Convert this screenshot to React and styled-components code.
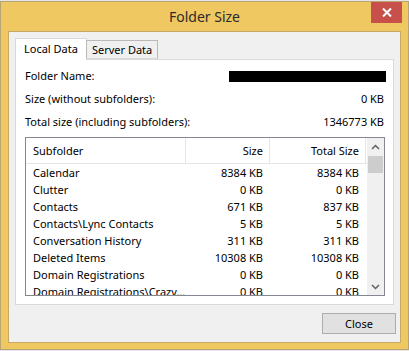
import React from 'react';
import styled, { createGlobalStyle } from 'styled-components';

const GlobalStyle = createGlobalStyle`
  html, body {
    margin: 0;
    padding: 0;
    background: #e6e6e6;
  }
  body {
    font-family: 'Noto Sans', 'Open Sans', sans-serif;
    font-size: 11px;
    color: #000;
  }
`;

const Page = styled.div`
  padding-top: 1px;
  width: 409px;
  height: 350px;
`;

const Window = styled.div`
  box-sizing: border-box;
  width: 409px;
  height: 349px;
  background: #f0c862;
  border: 1px solid #b8a472;
  display: flex;
  flex-direction: column;
`;

const TitleBar = styled.div`
  height: 29px;
  display: grid;
  grid-template-columns: 1fr auto 1fr;
  align-items: start;
`;

const Title = styled.div`
  grid-column: 2;
  font-size: 14px;
  line-height: 29px;
  color: #2b2b2b;
`;

const CloseX = styled.button`
  grid-column: 3;
  justify-self: end;
  margin-right: 6px;
  width: 31px;
  height: 21px;
  border: none;
  padding: 0;
  background: #c7504b;
  display: flex;
  align-items: center;
  justify-content: center;
`;

const Client = styled.div`
  box-sizing: border-box;
  margin: 0 7px 6px 7px;
  flex: 1;
  background: #f0f0f0;
  border: 1px solid #c4a968;
  padding: 7px 6px 8px 6px;
  display: flex;
  flex-direction: column;
`;

const TabStrip = styled.div`
  display: flex;
  align-items: flex-end;
  height: 20px;
  position: relative;
  z-index: 1;
`;

const Tab = styled.div`
  box-sizing: border-box;
  height: ${(p) => (p.$active ? '22px' : '19px')};
  margin-bottom: ${(p) => (p.$active ? '-1px' : '0')};
  padding: 0 ${(p) => (p.$active ? '8px' : '5px')};
  background: ${(p) => (p.$active ? '#fff' : '#f0f0f0')};
  border: 1px solid ${(p) => (p.$active ? '#d9d9d9' : '#b9b9b9')};
  border-bottom: ${(p) => (p.$active ? 'none' : '1px solid #d9d9d9')};
  margin-left: ${(p) => (p.$active ? '0' : '-1px')};
  line-height: ${(p) => (p.$active ? '20px' : '18px')};
  white-space: nowrap;
`;

const Panel = styled.div`
  box-sizing: border-box;
  height: 246px;
  background: #fff;
  border: 1px solid #d9d9d9;
  padding: 4px 9px 0 9px;
  display: flex;
  flex-direction: column;
`;

const InfoRow = styled.div`
  height: 23px;
  flex-shrink: 0;
  display: flex;
  align-items: center;
  justify-content: space-between;
`;

const Redacted = styled.div`
  width: 157px;
  height: 11px;
  background: #000;
  margin-right: -2px;
  margin-top: 1px;
`;

const ListBox = styled.div`
  box-sizing: border-box;
  margin-top: 4px;
  margin-right: -1px;
  height: 159px;
  flex-shrink: 0;
  border: 1px solid #828790;
  display: flex;
  overflow: hidden;
`;

const ListBody = styled.div`
  flex: 1;
  display: flex;
  flex-direction: column;
`;

const Cols = styled.div`
  display: grid;
  grid-template-columns: 160px 84px 96px;
  flex-shrink: 0;
`;

const HeaderRow = styled(Cols)`
  height: 25px;
  border-bottom: 1px solid #e5e5e5;
`;

const HeadCell = styled.div`
  display: flex;
  align-items: center;
  justify-content: ${(p) => (p.$right ? 'flex-end' : 'flex-start')};
  padding: 0 ${(p) => (p.$right ? '6px' : '0')} 0 ${(p) => (p.$right ? '0' : '7px')};
  border-right: 1px solid #e5e5e5;
`;

const Row = styled(Cols)`
  height: 17px;
`;

const Cell = styled.div`
  line-height: 17px;
  white-space: nowrap;
  text-align: ${(p) => (p.$right ? 'right' : 'left')};
  padding: 0 ${(p) => (p.$right ? '7px' : '0')} 0 ${(p) => (p.$right ? '0' : '7px')};
`;

const ScrollBar = styled.div`
  width: 17px;
  background: #f0f0f0;
  display: flex;
  flex-direction: column;
`;

const ScrollArrow = styled.div`
  height: 17px;
  display: flex;
  align-items: center;
  justify-content: center;
`;

const Thumb = styled.div`
  height: 17px;
  margin: 1px 1px 0 1px;
  background: #cdcdcd;
`;

const Track = styled.div`
  flex: 1;
`;

const Footer = styled.div`
  display: flex;
  justify-content: flex-end;
  margin-top: 8px;
`;

const Button = styled.button`
  box-sizing: border-box;
  width: 74px;
  height: 21px;
  margin-right: -2px;
  background: #e1e1e1;
  border: 1px solid #adadad;
  font-family: inherit;
  font-size: 11px;
  color: #000;
  padding: 0;
`;

const Chevron = ({ up }) => (
  <svg width="9" height="6" viewBox="0 0 9 6">
    <path
      d={up ? 'M1 5 L4.5 1.5 L8 5' : 'M1 1 L4.5 4.5 L8 1'}
      fill="none"
      stroke="#606060"
      strokeWidth="1.5"
    />
  </svg>
);

const rows = [
  ['Calendar', '8384 KB', '8384 KB'],
  ['Clutter', '0 KB', '0 KB'],
  ['Contacts', '671 KB', '837 KB'],
  ['Contacts\\Lync Contacts', '5 KB', '5 KB'],
  ['Conversation History', '311 KB', '311 KB'],
  ['Deleted Items', '10308 KB', '10308 KB'],
  ['Domain Registrations', '0 KB', '0 KB'],
  ['Domain Registrations\\Crazy...', '0 KB', '0 KB'],
];

export default function App() {
  return (
    <Page>
      <GlobalStyle />
      <Window>
        <TitleBar>
          <Title>Folder Size</Title>
          <CloseX aria-label="Close">
            <svg width="10" height="9" viewBox="0 0 10 9">
              <path d="M1 0.5 L9 8.5 M9 0.5 L1 8.5" stroke="#fff" strokeWidth="2" />
            </svg>
          </CloseX>
        </TitleBar>
        <Client>
          <TabStrip>
            <Tab $active>Local Data</Tab>
            <Tab>Server Data</Tab>
          </TabStrip>
          <Panel>
            <InfoRow>
              <span>Folder Name:</span>
              <Redacted />
            </InfoRow>
            <InfoRow>
              <span>Size (without subfolders):</span>
              <span>0 KB</span>
            </InfoRow>
            <InfoRow>
              <span>Total size (including subfolders):</span>
              <span>1346773 KB</span>
            </InfoRow>
            <ListBox>
              <ListBody>
                <HeaderRow>
                  <HeadCell>Subfolder</HeadCell>
                  <HeadCell $right>Size</HeadCell>
                  <HeadCell $right>Total Size</HeadCell>
                </HeaderRow>
                {rows.map(([name, size, total]) => (
                  <Row key={name}>
                    <Cell>{name}</Cell>
                    <Cell $right>{size}</Cell>
                    <Cell $right>{total}</Cell>
                  </Row>
                ))}
              </ListBody>
              <ScrollBar>
                <ScrollArrow><Chevron up /></ScrollArrow>
                <Thumb />
                <Track />
                <ScrollArrow><Chevron /></ScrollArrow>
              </ScrollBar>
            </ListBox>
          </Panel>
          <Footer>
            <Button>Close</Button>
          </Footer>
        </Client>
      </Window>
    </Page>
  );
}
